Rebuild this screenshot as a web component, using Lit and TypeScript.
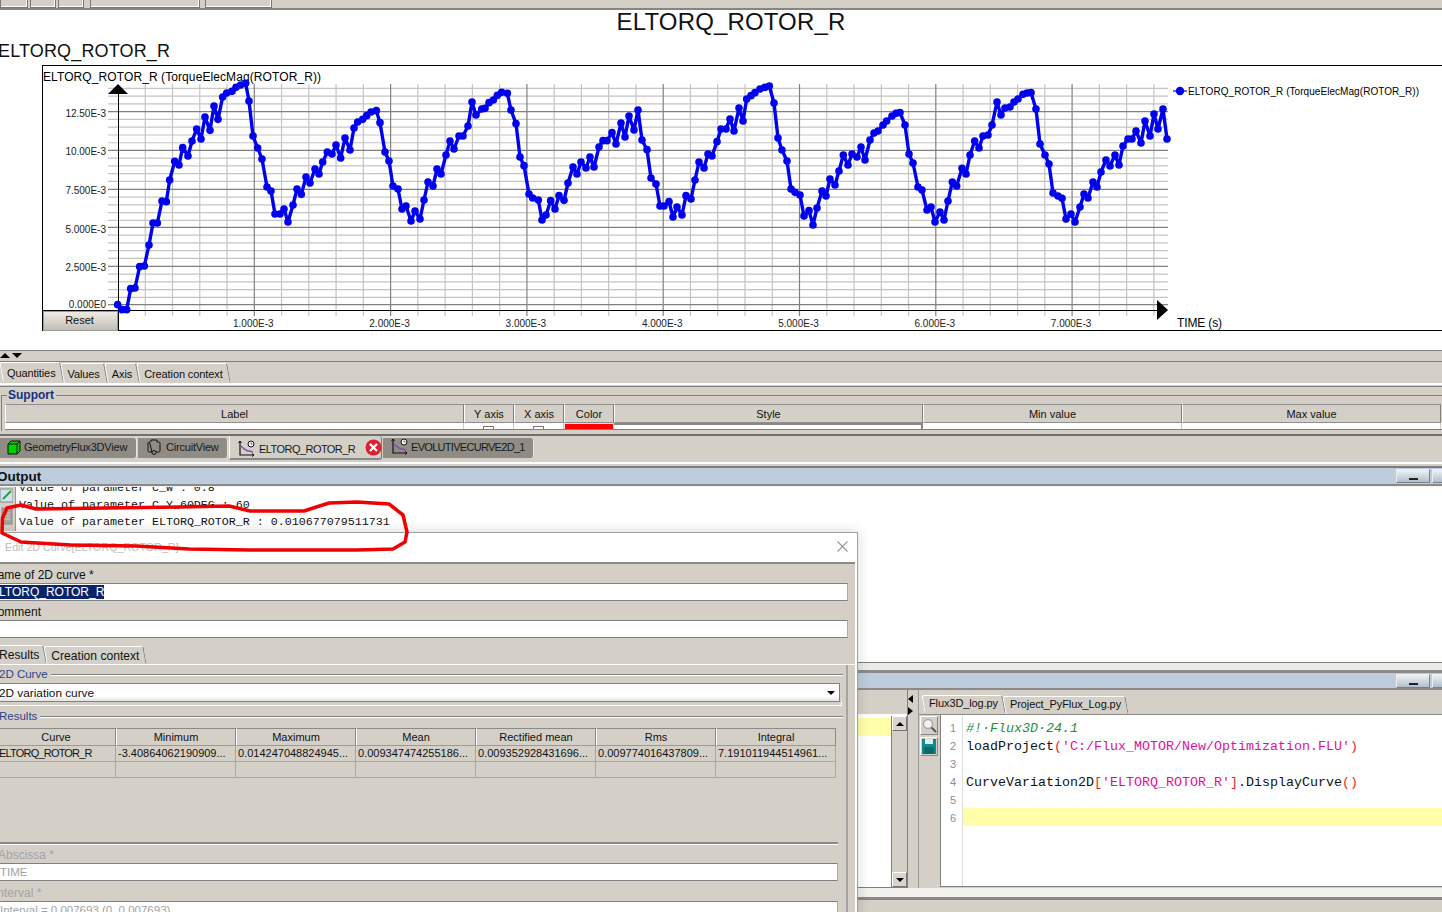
import { LitElement, css, html, svg } from "lit";
import { customElement } from "lit/decorators.js";

// curve points read off the plot, 3x coordinates per crop
const seg1 = [353,914,366,929,380,929,392,866,405,864,419,800,433,798,447,735,459,669,472,669,486,603,499,605,509,540,524,484,537,495,548,443,564,468,576,423,590,387,603,417,615,351,630,391,642,318,654,358,668,291,680,279,696,274,708,262,722,255,737,250,747,303,759,408,773,444,786,477,801,561,813,573,825,642,840,642,852,627,864,666,879,615,891,567,904,583,918,531,930,549,945,507,957,522,968,486,982,456,996,462,1008,435,1022,474,1035,414,1050,450,1062,384,1073,366,1088,358,1100,347,1113,336,1129,332,1140,368,1155,456,1167,483,1179,558,1194,567,1206,627,1218,618,1233,663,1245,633,1260,657,1272,600,1284,546,1299,558,1311,507,1323,522,1338,465,1350,423,1362,447,1377,408,1389,408,1404,378,1416,306,1428,345];
const seg2 = [5,147,15,145,27,128,40,120,52,106,65,97,82,100,93,150,108,191,120,291,132,317,147,402,158,414,175,420,186,480,198,465,212,422,225,447,237,407,252,421,264,369,279,321,291,342,303,306,318,324,330,291,342,321,357,261,369,242,381,242,396,218,408,252,423,189,435,231,447,168,462,210,474,150,486,240,501,269,513,354,528,372,540,438,552,438,567,425,579,471,591,441,606,465,618,407,633,417,645,360,657,306,672,324,684,282,696,288,711,245,723,207,738,207,750,177,762,213,777,144,789,183,800,117,813,107,825,98,840,87,855,82,868,78,882,129,894,234,906,270,921,303,933,387,945,397,960,405,972,468,987,452,999,495,1011,444,1026,393,1038,408,1050,357,1065,375,1077,333,1090,285,1104,315,1116,282,1131,291,1143,261,1155,300,1170,240,1182,219,1194,213,1209,195,1220,183,1236,168,1248,160,1260,158,1275,195,1287,282,1299,309,1314,381,1326,390,1341,450,1353,441,1365,486,1380,456,1392,480,1404,423,1417,366,1430,378];
const seg3 = [6,325,18,342,30,285,44,243,57,264,69,228,84,225,96,195,111,126,123,165,135,144,150,141,162,126,174,117,189,103,201,99,213,98,228,147,240,252,255,285,267,312,279,399,294,408,306,415,318,477,333,462,345,486,360,441,372,402,384,414,399,366,411,381,423,336,438,300,450,318,465,285,477,315,489,258,504,237,516,237,528,213,543,249,555,183,570,228,582,162,594,207,609,147,621,237];

function toPoints(raw: number[], ox: number, oy: number) {
  const out: [number, number][] = [];
  for (let i = 0; i < raw.length; i += 2) out.push([ox + raw[i] / 3, oy + raw[i + 1] / 3]);
  return out;
}

const curve = [...toPoints(seg1, 0, 0), ...toPoints(seg2, 480, 60), ...toPoints(seg3, 960, 60)];

const X0 = 118;
const XSTEP = 136.3;
const YMAJOR = [111.7, 150.3, 189.3, 227.3, 266.3, 304.7];
const YLABELS = ["12.50E-3", "10.00E-3", "7.500E-3", "5.000E-3", "2.500E-3", "0.000E0"];
const YBASE = [116.5, 154.5, 193.5, 232.5, 270.5, 307.5];

const tableCols = ["Curve", "Minimum", "Maximum", "Mean", "Rectified mean", "Rms", "Integral"];
const tableVals = [
  "ELTORQ_ROTOR_R",
  "-3.40864062190909...",
  "0.014247048824945...",
  "0.009347474255186...",
  "0.009352928431696...",
  "0.009774016437809...",
  "7.191011944514961...",
];

@customElement("app-root")
export class AppRoot extends LitElement {
  static styles = css`
    :host {
      display: block;
      position: relative;
      width: 1442px;
      height: 912px;
      overflow: hidden;
      background: #d4d0c8;
      font-family: "Liberation Sans", Arial, sans-serif;
      font-size: 12px;
      color: #111;
    }

    .toolbar {
      height: 10px;
      box-sizing: border-box;
      border-bottom: 2px solid #858585;
      display: flex;
      align-items: flex-end;
      gap: 2px;
      overflow: hidden;
    }
    .tool {
      height: 8px;
      box-sizing: border-box;
      border: 1px solid #777;
      border-top: none;
      box-shadow: inset -1px -1px 0 #fff;
    }

    .plot {
      height: 340px;
      background: #fff;
    }
    .title {
      height: 26px;
      line-height: 23px;
      font-size: 24px;
      letter-spacing: 0.15px;
      text-align: center;
      padding-left: 20px;
    }
    .subtitle {
      height: 29px;
      line-height: 30px;
      font-size: 18px;
      letter-spacing: 0.15px;
      margin-left: -2px;
    }
    .frame {
      position: relative;
      margin-left: 42px;
      height: 264px;
      border: 1px solid #000;
      border-right: none;
    }
    .frame svg {
      display: block;
    }
    .reset {
      position: absolute;
      left: 0;
      top: 245px;
      width: 71px;
      padding-right: 2px;
      height: 18px;
      border: 1px solid #999;
      background: linear-gradient(#efece6, #c2beb6);
      text-align: center;
      font-size: 11px;
      line-height: 17px;
    }

    .sash {
      height: 12px;
      box-sizing: border-box;
      border-top: 1px solid #808080;
      border-bottom: 1px solid #808080;
      display: flex;
      gap: 2px;
      padding-top: 2px;
    }
    .tri-up,
    .tri-down {
      width: 0;
      height: 0;
      border-left: 5px solid transparent;
      border-right: 5px solid transparent;
    }
    .tri-up {
      border-bottom: 5px solid #000;
    }
    .tri-down {
      border-top: 5px solid #000;
    }

    .tabs {
      display: flex;
      align-items: flex-end;
      box-sizing: border-box;
      border-bottom: 1px solid #fff;
    }
    .tab {
      position: relative;
      padding: 0 6px;
      white-space: nowrap;
    }
    .tab::before {
      content: "";
      position: absolute;
      inset: 0 0 0 0;
      border-top: 1px solid #fff;
      border-left: 1px solid #fff;
      border-right: 1px solid #808080;
      border-radius: 3px 3px 0 0;
      transform: skewX(10deg);
    }
    .tab.active {
      position: relative;
      top: -1px;
    }

    .top-tabs {
      height: 22px;
      padding-left: 1px;
      font-size: 11px;
      line-height: 22px;
    }
    .top-tabs .tab {
      height: 20px;
      letter-spacing: -0.1px;
    }

    .support {
      height: 46px;
      box-sizing: border-box;
      border-top: 1px solid #fff;
      padding-top: 1px;
    }
    .support-in {
      height: 44px;
      border-top: 1px solid #808080;
      background: linear-gradient(#808080, #808080) 1px 8px / 1px 36px no-repeat;
    }
    .legend {
      display: flex;
      align-items: center;
      height: 17px;
      color: #15307f;
      font-weight: bold;
      padding-left: 1px;
    }
    .legend::before {
      content: "";
      width: 6px;
      height: 1px;
      background: #808080;
      margin-top: -1px;
    }
    .legend span {
      padding: 0 2px 0 1px;
      margin-top: -1px;
    }
    .legend i {
      flex: 1;
      height: 1px;
      background: #808080;
      margin-top: -1px;
    }
    .grid-head {
      display: grid;
      grid-template-columns: 459px 50px 50px 50px 309px 259px 259px;
      margin-left: 5px;
      font-size: 11px;
    }
    .hc {
      height: 19px;
      line-height: 18px;
      box-sizing: border-box;
      text-align: center;
      border: 1px solid #8f8f8f;
      border-left-color: #fff;
      border-right-color: #808080;
    }
    .grid-row {
      display: grid;
      grid-template-columns: 459px 50px 50px 50px 309px 259px 259px;
      margin-left: 5px;
      height: 6px;
      background: #fff;
      border-bottom: 1px solid #808080;
      overflow: hidden;
    }
    .gc {
      box-sizing: border-box;
      border-right: 1px solid #ccc;
      display: flex;
      justify-content: center;
    }
    .check {
      width: 11px;
      height: 11px;
      margin-top: 3px;
      border: 1px solid #777;
      box-sizing: border-box;
    }
    .gc.red {
      background: #ff0000;
      border: 1px solid #ddd;
    }
    .gc.style {
      border-top: 2px solid #888;
      border-right: 2px solid #888;
    }

    .view-tabs {
      height: 32px;
      box-sizing: border-box;
      padding-top: 8px;
      background: linear-gradient(#707070, #707070) 0 4px / 100% 2px no-repeat;
      display: flex;
      align-items: flex-start;
      gap: 1px;
      font-size: 11px;
    }
    .vtab {
      height: 20px;
      box-sizing: border-box;
      display: flex;
      align-items: center;
      gap: 5px;
      background: #8f8c86;
      color: #191919;
      padding-left: 5px;
      padding-bottom: 2px;
      border-radius: 0 3px 3px 0;
      border-right: 1px solid #e8e6e0;
      letter-spacing: -0.2px;
      white-space: nowrap;
      overflow: hidden;
    }
    .vtab.on {
      height: 24px;
      margin-top: -2px;
      background: #d4d0c8;
      border-left: 1px solid #fff;
      border-right: 1px solid #777;
      border-bottom: 2px solid #888;
      padding-top: 3px;
      padding-bottom: 0;
      letter-spacing: -0.55px;
    }
    .curve-ic {
      flex: none;
      margin-left: 2px;
    }
    .view-rule {
      height: 6px;
      box-sizing: border-box;
      border-top: 2px solid #fff;
      border-bottom: 2px solid #7d7d7d;
    }

    .bar {
      background: #bdcddb;
      border-bottom: 2px solid #8a8a8a;
      display: flex;
      align-items: center;
      justify-content: space-between;
      box-sizing: border-box;
    }
    .bar b {
      font-size: 13.5px;
      margin-left: -3px;
    }
    .bar-btns {
      display: flex;
      gap: 2px;
      margin-right: -24px;
    }
    .bar-btn {
      width: 34px;
      height: 14px;
      box-sizing: border-box;
      border: 1px solid #808080;
      border-top-color: #eee;
      border-left-color: #eee;
      background: linear-gradient(#eef2f6, #b0bfcc);
      display: flex;
      align-items: flex-end;
      justify-content: center;
      padding-bottom: 2px;
    }
    .bar-btn i {
      width: 9px;
      height: 2px;
      background: #222;
    }

    .console {
      height: 175px;
      background: #fff;
      border-top: 1px solid #f2f2f2;
      border-bottom: 1px solid #808080;
      display: flex;
      overflow: hidden;
    }
    .console-icons {
      width: 13px;
      height: 44px;
      flex: none;
      background: #d4d0c8;
      display: flex;
      flex-direction: column;
      gap: 4px;
      padding-right: 2px;
      border-right: 1px solid #999;
    }
    .console-lines {
      margin-top: -7px;
      padding-left: 3px;
      font-family: "Liberation Mono", "Courier New", monospace;
      font-size: 11.67px;
      line-height: 17px;
      white-space: pre;
      color: #111;
    }

    .gap-strip {
      height: 10px;
      box-sizing: border-box;
      background: #ecebe7;
      border-bottom: 3px solid #8a8a8a;
    }
    .lower {
      height: 198px;
      display: flex;
    }
    .left-pane {
      width: 907px;
      flex: none;
      display: flex;
      flex-direction: column;
      border-right: 1px solid #808080;
    }
    .pane-strip {
      height: 26px;
      flex: none;
      box-sizing: border-box;
      border-bottom: 2px solid #fff;
    }
    .left-body {
      height: 172px;
      box-sizing: border-box;
      background: #fff;
      display: flex;
      justify-content: flex-end;
      border-bottom: 1px solid #808080;
    }
    .left-text {
      flex: 1;
      padding-top: 2px;
    }
    .yellow {
      height: 18px;
      background: #ffffaa;
    }
    .scroll {
      width: 15px;
      flex: none;
      background: #d4d0c8;
      border-left: 1px solid #808080;
      display: flex;
      flex-direction: column;
      justify-content: space-between;
    }
    .scroll-btn {
      height: 15px;
      box-sizing: border-box;
      background: #d9d5ce;
      border: 1px solid #fff;
      border-right-color: #777;
      border-bottom-color: #777;
      display: flex;
      align-items: center;
      justify-content: center;
    }
    .arrow-up,
    .arrow-down {
      width: 0;
      height: 0;
      border-left: 4px solid transparent;
      border-right: 4px solid transparent;
    }
    .arrow-up {
      border-bottom: 4px solid #000;
    }
    .arrow-down {
      border-top: 4px solid #000;
    }
    .splitter {
      width: 10px;
      flex: none;
      display: flex;
      flex-direction: column;
      gap: 4px;
      padding-top: 5px;
      box-sizing: border-box;
      align-items: flex-start;
    }
    .tri-left,
    .tri-right {
      width: 0;
      height: 0;
      border-top: 4px solid transparent;
      border-bottom: 4px solid transparent;
    }
    .tri-left {
      border-right: 5px solid #000;
    }
    .tri-right {
      border-left: 5px solid #000;
    }
    .right-pane {
      flex: 1;
      min-width: 0;
      display: flex;
      flex-direction: column;
      border-left: 1px solid #999;
    }
    .file-tabs {
      height: 25px;
      flex: none;
      padding-left: 4px;
      font-size: 11px;
      line-height: 17px;
      letter-spacing: -0.1px;
      border-bottom: 1px solid #8a8a8a;
    }
    .file-tabs .tab {
      height: 18px;
    }
    .right-body {
      display: flex;
      height: 172px;
    }
    .tool-col {
      width: 21px;
      flex: none;
      padding-left: 1px;
      display: flex;
      flex-direction: column;
      gap: 2px;
      padding-top: 1px;
      box-sizing: border-box;
    }
    .tool-btn {
      width: 18px;
      height: 19px;
      box-sizing: border-box;
      border: 1px solid #fff;
      border-right-color: #888;
      border-bottom-color: #888;
    }
    .editor {
      flex: 1;
      display: flex;
      background: #fff;
      border-left: 1px solid #808080;
      border-bottom: 1px solid #808080;
      font-family: "Liberation Mono", "Courier New", monospace;
      font-size: 13.33px;
      line-height: 18px;
    }
    .gutter {
      width: 22px;
      flex: none;
      box-sizing: border-box;
      border-right: 1px solid #ddd;
      color: #8d8d9d;
      font-family: "Liberation Sans", Arial, sans-serif;
      font-size: 11px;
      text-align: right;
      padding: 4px 6px 0 0;
    }
    .code {
      flex: 1;
      padding-top: 3px;
      padding-left: 3px;
    }
    .code .ln {
      height: 18px;
      line-height: 22px;
      white-space: pre;
    }
    .code .ln.cur {
      background: #ffffaa;
      margin-left: -3px;
    }
    .cm {
      color: #1f8f3a;
      font-style: italic;
    }
    .st {
      color: #e0109a;
    }
    .br {
      color: #ee2222;
    }
    .foot {
      height: 25px;
      box-sizing: border-box;
      border-top: 9px solid #f2f1ee;
      box-shadow: inset 0 3px 0 #888;
    }

    .dialog {
      position: absolute;
      left: -20px;
      top: 532px;
      width: 878px;
      height: 400px;
      box-sizing: border-box;
      background: #fff;
      border: 1px solid #a0a0a0;
      box-shadow: 0 0 12px rgba(0, 0, 0, 0.16);
    }
    .dlg-title {
      height: 29px;
      box-sizing: border-box;
      display: flex;
      align-items: center;
      justify-content: space-between;
      padding: 0 9px 2px 24px;
      color: #bdbdbd;
      font-size: 10.7px;
    }
    .dlg-body {
      background: #d4d0c8;
      margin-right: 2px;
      height: 370px;
      border-top: 2px solid #8a8a8a;
    }
    .lbl {
      height: 19px;
      line-height: 22px;
      padding-left: 8px;
    }
    .lbl.off {
      color: #a3a3a3;
    }
    .lbl.abs {
      padding-left: 17px;
    }
    .lbl.intv {
      padding-left: 13px;
      height: 20px;
      line-height: 24px;
    }
    .field {
      height: 18px;
      box-sizing: border-box;
      margin-right: 7px;
      background: #fff;
      border-top: 1px solid #808080;
      border-bottom: 1px solid #808080;
      border-right: 1px solid #aaa;
      padding-left: 10px;
      line-height: 16px;
      white-space: nowrap;
    }
    .field .sel {
      background: #0a246a;
      color: #fff;
    }
    .field.off {
      color: #a3a3a3;
      margin-right: 8px;
      padding-left: 19px;
      font-size: 11.5px;
    }
    .dlg-tabs {
      height: 26px;
      margin-top: 1px;
      padding-left: 12px;
      font-size: 12.1px;
      line-height: 20px;
    }
    .dlg-tabs .tab {
      height: 18px;
    }
    .dlg-panel {
      margin-right: 7px;
      border-right: 2px solid #a5a5a5;
      height: 300px;
    }
    .grp {
      display: flex;
      align-items: center;
      height: 18px;
      color: #2a4488;
      padding-left: 18px;
      gap: 3px;
      font-size: 11.5px;
    }
    .grp i {
      flex: 1;
      height: 1px;
      background: #808080;
      box-shadow: 0 1px 0 #fff;
      margin-right: 3px;
    }
    .combo {
      height: 19px;
      box-sizing: border-box;
      margin-right: 6px;
      border: 1px solid #808080;
      border-left: none;
      background: linear-gradient(#fff 70%, #e4e4e4);
      padding-left: 18px;
      display: flex;
      align-items: center;
      justify-content: space-between;
      padding-right: 4px;
      font-size: 11.8px;
    }
    .combo-rule {
      height: 3px;
      margin-right: 4px;
      border-bottom: 1px solid #fff;
      margin-bottom: 1px;
      border-right: 1px solid #fff;
    }
    .result-box {
      height: 116px;
      box-sizing: border-box;
      margin: 3px 8px 0 0;
      padding-left: 15px;
      border-bottom: 2px solid #8a8a8a;
      box-shadow: 0 1px 0 #fff;
    }
    .rt {
      display: grid;
      grid-template-columns: repeat(7, 120px);
      font-size: 11px;
    }
    .rt .h {
      height: 18px;
      line-height: 17px;
      text-align: center;
      box-sizing: border-box;
      border: 1px solid #8a8a8a;
      border-left-color: #fff;
      border-right-color: #8a8a8a;
      border-bottom-color: #999;
    }
    .rt .c {
      height: 16px;
      line-height: 15px;
      box-sizing: border-box;
      border-right: 1px solid #a8a8a8;
      border-bottom: 1px solid #a8a8a8;
      padding-left: 2px;
      white-space: nowrap;
      overflow: hidden;
    }
    .rt .c.name {
      padding-left: 3px;
      letter-spacing: -0.8px;
    }

    .scribble {
      position: absolute;
      left: 0;
      top: 0;
      pointer-events: none;
    }
  `;

  renderChart() {
    const majorX = [1, 2, 3, 4, 5, 6, 7].map((n) => X0 + n * XSTEP);
    const minorX: number[] = [];
    for (let i = 1; i <= 38; i++) if (i % 5 !== 0) minorX.push(X0 + (i * XSTEP) / 5);
    const minorY: number[] = [];
    for (let i = -1; i < YMAJOR.length - 1; i++) {
      const top = i < 0 ? YMAJOR[0] - 38.8 : YMAJOR[i];
      for (let k = 1; k < 5; k++) {
        const y = top + k * 7.76;
        if (y > 86) minorY.push(y);
      }
    }
    const line = curve.map((p) => p.join(",")).join(" ");
    return html`<svg width="1399" height="264" viewBox="43 66 1399 264" font-family="Liberation Sans, Arial, sans-serif">
      ${minorY.map((y) => svg`<line x1="108" x2="1168" y1=${y} y2=${y} stroke="#c4c4c4" stroke-width="1.2"/>`)}
      ${minorX.map((x) => svg`<line x1=${x} x2=${x} y1="84" y2="316" stroke="#c4c4c4" stroke-width="1.2"/>`)}
      ${YMAJOR.map((y) => svg`<line x1="108" x2="1168" y1=${y} y2=${y} stroke="#808080" stroke-width="1.2"/>`)}
      ${majorX.map((x) => svg`<line x1=${x} x2=${x} y1="84" y2="316" stroke="#808080" stroke-width="1.2"/>`)}
      <line x1="118.5" x2="118.5" y1="90" y2="330" stroke="#000" stroke-width="1"/>
      <line x1="43" x2="1160" y1="310.5" y2="310.5" stroke="#000" stroke-width="1"/>
      <path d="M118 84 L128 94 L108 94 Z" fill="#000"/>
      <path d="M1157 300 L1168 310 L1157 320 Z" fill="#000"/>
      <text x="43" y="81" font-size="12" textLength="278" lengthAdjust="spacing">ELTORQ_ROTOR_R (TorqueElecMag(ROTOR_R))</text>
      ${YLABELS.map(
        (t, i) => svg`<text x="106" y=${YBASE[i]} text-anchor="end" font-size="10" fill="#222">${t}</text>`
      )}
      ${majorX.map(
        (x, i) => svg`<text x=${x - 1} y="327" text-anchor="middle" font-size="10" fill="#222">${i + 1}.000E-3</text>`
      )}
      <text x="1177" y="327" font-size="12" textLength="45" lengthAdjust="spacing">TIME (s)</text>
      <line x1="1173" x2="1187" y1="91" y2="91" stroke="#0000f0" stroke-width="1.2"/>
      <circle cx="1180" cy="91" r="4.2" fill="#0000f0"/>
      <text x="1188" y="95" font-size="10" textLength="231" lengthAdjust="spacing">ELTORQ_ROTOR_R (TorqueElecMag(ROTOR_R))</text>
      <polyline points=${line} fill="none" stroke="#0000f0" stroke-width="3.4" stroke-linejoin="round"/>
      ${curve.map((p) => svg`<circle cx=${p[0]} cy=${p[1]} r="3.8" fill="#0000f0"/>`)}
    </svg>`;
  }

  curveIcon() {
    return html`<svg class="curve-ic" width="20" height="18" viewBox="0 0 20 18">
      <path d="M3 1 V15 H17" fill="none" stroke="#111" stroke-width="1.2"/>
      <path d="M1.5 3 L3 1 L4.5 3 M15 13.5 L17 15 L15 16.5" fill="none" stroke="#111"/>
      <path d="M4 6 C7 9 9 11 12 11 L16 12" fill="none" stroke="#8a4fa8" stroke-width="1.5"/>
      <circle cx="14" cy="4" r="3" fill="#fff" stroke="#111"/>
      <path d="M14 2.5 V4 H15.5" fill="none" stroke="#111" stroke-width=".7"/>
    </svg>`;
  }

  render() {
    return html`
      <div class="toolbar">
        <div class="tool" style="width:28px"></div>
        <div class="tool" style="width:26px"></div>
        <div class="tool" style="width:26px"></div>
        <div style="width:2px"></div>
        <div class="tool" style="width:110px"></div>
        <div style="width:1px"></div>
        <div class="tool" style="width:67px"></div>
      </div>

      <div class="plot">
        <div class="title">ELTORQ_ROTOR_R</div>
        <div class="subtitle">ELTORQ_ROTOR_R</div>
        <div class="frame">
          ${this.renderChart()}
          <div class="reset">Reset</div>
        </div>
      </div>

      <div class="sash"><div class="tri-up"></div><div class="tri-down"></div></div>

      <div class="tabs top-tabs">
        <div class="tab active">Quantities</div>
        <div class="tab">Values</div>
        <div class="tab">Axis</div>
        <div class="tab">Creation context</div>
      </div>

      <div class="support">
        <div class="support-in">
          <div class="legend"><span>Support</span><i></i></div>
          <div class="grid-head">
            ${["Label", "Y axis", "X axis", "Color", "Style", "Min value", "Max value"].map(
              (h) => html`<div class="hc">${h}</div>`
            )}
          </div>
          <div class="grid-row">
            <div class="gc"></div>
            <div class="gc"><div class="check"></div></div>
            <div class="gc"><div class="check"></div></div>
            <div class="gc red"></div>
            <div class="gc style"></div>
            <div class="gc"></div>
            <div class="gc"></div>
          </div>
        </div>
      </div>

      <div class="view-tabs">
        <div class="vtab" style="width:137px">
          <svg width="14" height="15" viewBox="0 0 14 15" style="flex:none;margin:0 -2px 0 2px">
            <path d="M1 4 L4 1 H13 V11 L10 14 H1 Z" fill="#00d000" stroke="#111"/>
            <path d="M1 4 H10 V14 M10 4 L13 1" fill="none" stroke="#111"/>
          </svg>
          GeometryFlux3DView
        </div>
        <div class="vtab" style="width:90px">
          <svg width="16" height="16" viewBox="0 0 16 16" fill="none" stroke="#111" style="flex:none;margin:0 -1px 0 3px">
            <path d="M5 3 V1 H11 V3 H12.5 C13.5 3 14 3.5 14 4.5 V11.5 C14 12.5 13.5 13 12.5 13 H10 M6 13 H3.5 C2.5 13 2 12.5 2 11.5 V4.5 C2 3.5 2.5 3 3.5 3 Z"/>
            <circle cx="8" cy="13.5" r="2"/>
          </svg>
          CircuitView
        </div>
        <div class="vtab on" style="width:153px">
          ${this.curveIcon()}
          <span style="margin-left:-3px">ELTORQ_ROTOR_R</span>
          <svg style="margin-left:5px;margin-top:-3px;flex:none" width="17" height="17" viewBox="0 0 17 17">
            <circle cx="8.5" cy="8.5" r="8" fill="#dd2030"/>
            <path d="M5 5 L12 12 M12 5 L5 12" stroke="#fff" stroke-width="2.4"/>
          </svg>
        </div>
        <div class="vtab" style="width:151px">${this.curveIcon()}<span style="margin-left:-4px;letter-spacing:-0.7px">EVOLUTIVECURVE2D_1</span></div>
      </div>
      <div class="view-rule"></div>

      <div class="bar" style="height:18px">
        <b>Output</b>
        <div class="bar-btns"><div class="bar-btn"><i></i></div><div class="bar-btn"><i></i></div></div>
      </div>
      <div class="console">
        <div class="console-icons">
          <svg width="13" height="16" viewBox="0 0 13 16">
            <rect x="0" y="2" width="13" height="13" fill="#cfe3f2" stroke="#888"/>
            <path d="M3 12 L11 4" stroke="#2f9b3a" stroke-width="2"/>
          </svg>
          <svg width="13" height="18" viewBox="0 0 13 18">
            <rect x="2" y="1" width="10" height="16" fill="#a8a59f" stroke="#8a8a8a"/>
            <path d="M4 6 H10 M4 9 H10 M4 12 H10" stroke="#d4d0c8"/>
          </svg>
        </div>
        <div class="console-lines">Value of parameter C_W : 0.8
Value of parameter C_Y_60DEG : 60
Value of parameter ELTORQ_ROTOR_R : 0.010677079511731</div>
      </div>

      <div class="gap-strip"></div>
      <div class="bar" style="height:17px">
        <span></span>
        <div class="bar-btns"><div class="bar-btn"><i></i></div><div class="bar-btn"><i></i></div></div>
      </div>

      <div class="lower">
        <div class="left-pane">
          <div class="pane-strip"></div>
          <div class="left-body">
            <div class="left-text"><div class="yellow"></div></div>
            <div class="scroll">
              <div class="scroll-btn"><div class="arrow-up"></div></div>
              <div class="scroll-btn"><div class="arrow-down"></div></div>
            </div>
          </div>
        </div>
        <div class="splitter"><div class="tri-left"></div><div class="tri-right"></div></div>
        <div class="right-pane">
          <div class="tabs file-tabs">
            <div class="tab active">Flux3D_log.py</div>
            <div class="tab">Project_PyFlux_Log.py</div>
          </div>
          <div class="right-body">
            <div class="tool-col">
              <div class="tool-btn">
                <svg width="16" height="17" viewBox="0 0 16 17">
                  <circle cx="7" cy="7" r="4.5" fill="#f2f2f2" stroke="#a8a8a8" stroke-width="1.4"/>
                  <path d="M10.5 10.5 L15 15" stroke="#555" stroke-width="2"/>
                </svg>
              </div>
              <div class="tool-btn">
                <svg width="16" height="17" viewBox="0 0 16 17">
                  <path d="M1 1 H15 V16 H1 Z" fill="#118a8a"/>
                  <rect x="4" y="1" width="8" height="5" fill="#d8f0f0"/>
                  <rect x="3" y="9" width="10" height="7" fill="#0b6a6a"/>
                </svg>
              </div>
            </div>
            <div class="editor">
              <div class="gutter">${[1, 2, 3, 4, 5, 6].map((n) => html`<div style="height:18px">${n}</div>`)}</div>
              <div class="code">
                <div class="ln"><span class="cm">#!·Flux3D·24.1</span></div>
                <div class="ln">loadProject<span class="br">(</span><span class="st">'C:/Flux_MOTOR/New/Optimization.FLU'</span><span class="br">)</span></div>
                <div class="ln"></div>
                <div class="ln">CurveVariation2D<span class="br">[</span><span class="st">'ELTORQ_ROTOR_R'</span><span class="br">]</span>.DisplayCurve<span class="br">()</span></div>
                <div class="ln"></div>
                <div class="ln cur"></div>
              </div>
            </div>
          </div>
        </div>
      </div>
      <div class="foot"></div>

      <div class="dialog">
        <div class="dlg-title">
          <span>Edit 2D Curve[ELTORQ_ROTOR_R]</span>
          <svg width="11" height="11" viewBox="0 0 11 11"><path d="M0.5 0.5 L10.5 10.5 M10.5 0.5 L0.5 10.5" stroke="#999" stroke-width="1.2"/></svg>
        </div>
        <div class="dlg-body">
          <div class="lbl">Name of 2D curve *</div>
          <div class="field"><span class="sel">ELTORQ_ROTOR_R</span></div>
          <div class="lbl">Comment</div>
          <div class="field"></div>
          <div class="tabs dlg-tabs">
            <div class="tab active">Results</div>
            <div class="tab">Creation context</div>
          </div>
          <div class="dlg-panel">
            <div class="grp"><span>2D Curve</span><i></i></div>
            <div class="combo"><span>2D variation curve</span><span class="arrow-down"></span></div>
            <div class="combo-rule"></div>
            <div class="grp"><span>Results</span><i></i></div>
            <div class="result-box">
              <div class="rt">
                ${tableCols.map((h) => html`<div class="h">${h}</div>`)}
                ${tableVals.map((v, i) => html`<div class="c ${i === 0 ? "name" : ""}">${v}</div>`)}
                ${tableVals.map(() => html`<div class="c"></div>`)}
              </div>
            </div>
            <div class="lbl off abs">Abscissa *</div>
            <div class="field off">TIME</div>
            <div class="lbl off intv">Interval *</div>
            <div class="field off">Interval = 0.007693 (0, 0.007693)</div>
          </div>
        </div>
      </div>

      <svg class="scribble" width="1442" height="912" viewBox="0 0 1442 912">
        <path
          d="M7 508 L2.5 518 L2 533 L21 542 L71 545 L136 546 L189 549 L250 550 L357 550 L393 549 L405 542 L407 532 L403 515 L389 504 L357 502 L329 503 L304 511 L250 511 L229 506 L179 507 L107 508 L36 509 L21 505 Z"
          fill="none"
          stroke="#f00000"
          stroke-width="3.5"
          stroke-linejoin="round"
        />
      </svg>
    `;
  }
}
